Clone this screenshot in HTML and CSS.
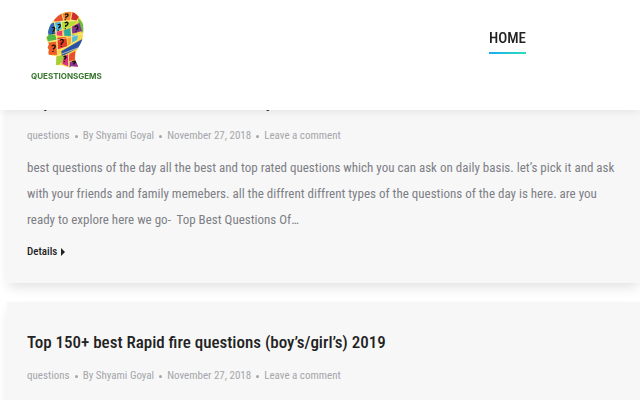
FILE: index.html
```html
<!DOCTYPE html>
<html lang="en">
<head>
<meta charset="utf-8">
<meta name="viewport" content="width=device-width, initial-scale=1">
<title>QuestionsGems</title>
<link rel="stylesheet" href="styles.css">
</head>
<body>
<header class="site-header">
  <a class="brand" href="#">
    <svg class="brand-mark" viewBox="78 33 120 174" aria-hidden="true">
      <defs>
        <clipPath id="head"><path d="M105 57Q120 37 147 35Q164 34 174 48Q193 66 190 95Q189 121 177 139Q161 163 167 182L175 200L154 199L148 203L127 196L108 195L109 169Q99 166 87 164Q84 159 87 149L83 143L87 132L78 115Q79 110 86 106L84 96Q88 73 105 57Z"/></clipPath>
      </defs>
      <g clip-path="url(#head)">
        <path fill="#f7d84a" d="M70 30h130v180H70z"/>
        <path fill="#e94f2d" d="M100 60L124 34L130 61L108 68Z"/>
        <path fill="#f58a32" d="M126 34L155 34L150 61L131 60Z"/>
        <path fill="#cf2f2c" d="M157 34L178 48L169 62L153 58Z"/>
        <path fill="#2c67b8" d="M84 75L103 66L106 102L82 106Z"/>
        <path fill="#50b9e2" d="M105 70L122 64L126 87L109 95Z"/>
        <path fill="#b9dc37" d="M124 64L174 63L157 79L126 88Z"/>
        <path fill="#6bbd45" d="M173 53L194 75L191 99L181 93Z"/>
        <path fill="#82358c" d="M154 81L178 68L186 93L157 101Z"/>
        <path fill="#52b848" d="M78 103L105 105L111 119L84 125Z"/>
        <path fill="#e73d70" d="M109 95L130 91L128 108L110 106Z"/>
        <path fill="#25aea0" d="M132 91L151 84L153 108L133 107Z"/>
        <path fill="#f05b28" d="M80 128L109 125L112 164L80 165Z"/>
        <path fill="#e63b28" d="M112 113L139 111L142 139L114 149Z"/>
        <path fill="#f8a530" d="M142 109L155 108L153 131L144 137Z"/>
        <path fill="#57bad5" d="M155 104L174 105L171 121L156 128Z"/>
        <path fill="#2951a5" d="M124 154L192 114L181 141L125 169Z"/>
        <path fill="#a5ce3b" d="M109 169L135 166L129 185L108 199Z"/>
        <path fill="#da2f79" d="M132 168L145 163L145 199L127 192Z"/>
        <path fill="#ec4a33" d="M148 162L166 153L164 180L146 184Z"/>
        <path fill="#8d3596" d="M149 186L168 181L178 204L148 203Z"/>
        <path fill="none" stroke="#fff4ad" stroke-width="2" d="M124 36L131 61M151 62L157 34M82 72L108 65L174 62M103 66L110 106L112 163M124 64L129 110M155 78L155 130M80 126L112 120L191 101M112 150L142 140L173 120M109 168L181 141M145 162L147 204"/>
        <path fill="none" stroke="#17130f" stroke-width="4" d="M135 45Q141 39 144 44Q145 49 138 51L137 55M136 58v3M134 69Q143 64 144 70Q143 76 137 77L137 81M136 85v3M113 75Q120 70 121 77Q119 82 115 85M115 89v3M96 84Q103 79 104 86Q102 91 98 95M98 98v3M164 80Q172 74 174 82Q173 88 168 90M168 94v3M120 121Q128 115 130 122Q129 128 124 131L124 135M124 138v3M95 138Q104 132 106 139Q104 145 99 148M99 153v3M131 171Q136 166 138 172L133 179M133 183v3M157 186Q164 181 166 187L160 193"/>
      </g>
    </svg>
    <span class="brand-name">QUESTIONSGEMS</span>
  </a>
  <nav class="site-nav"><a class="nav-link" href="#">HOME</a></nav>
</header>
<main class="posts">
  <article class="post">
    <h2 class="post-title"><a href="#">Top 100+ Best Questions Of The Day</a></h2>
    <div class="post-meta"><a href="#">questions</a><a href="#">By Shyami Goyal</a><a href="#">November 27, 2018</a><a href="#">Leave a comment</a></div>
    <p class="post-excerpt">best questions of the day all the best and top rated questions which you can ask on daily basis. let’s pick it and ask with your friends and family memebers. all the diffrent diffrent types of the questions of the day is here. are you ready to explore here we go-&nbsp; Top Best Questions Of…</p>
    <a class="details" href="#">Details</a>
  </article>
  <article class="post">
    <h2 class="post-title"><a href="#">Top 150+ best Rapid fire questions (boy’s/girl’s) 2019</a></h2>
    <div class="post-meta"><a href="#">questions</a><a href="#">By Shyami Goyal</a><a href="#">November 27, 2018</a><a href="#">Leave a comment</a></div>
  </article>
</main>
</body>
</html>
```
FILE: styles.css
```css
* { box-sizing: border-box; }
body {
  margin: 0;
  background: #fff;
  font-family: "Roboto Condensed", Roboto, "Liberation Sans", sans-serif;
  color: #222;
  overflow: hidden;
}
a { color: inherit; text-decoration: none; }
.site-header {
  position: fixed;
  top: 0;
  left: 0;
  right: 0;
  z-index: 2;
  height: 110px;
  padding: 11px 114px 0 31px;
  display: flex;
  justify-content: space-between;
  align-items: flex-start;
  background: #fff;
  box-shadow: 0 0 10px rgba(0, 0, 0, 0.1);
}
.brand { display: flex; flex-direction: column; align-items: center; }
.brand-mark { width: 40px; height: 58px; }
.brand-name {
  font: 700 8px/14px Inter, sans-serif;
  color: #37772f;
}
.site-nav { padding-top: 15px; }
.nav-link {
  display: block;
  font-size: 15px;
  font-weight: 500;
  line-height: 24px;
  padding-bottom: 2px;
  border-bottom: 2px solid;
  border-image: linear-gradient(90deg, #18aaf5, #2de0b5) 1;
}
.posts {
  display: flex;
  flex-direction: column;
  gap: 19px;
  padding: 62px 0 0 7px;
}
.post {
  padding: 27px 20px 21px;
  background: #f7f7f7;
  box-shadow: 0 6px 12px -2px rgba(0, 0, 0, 0.12);
}
.post-title {
  margin: 0 0 10px;
  font-size: 17px;
  font-weight: 500;
  line-height: 26px;
}
.post-meta {
  display: flex;
  font-size: 11px;
  line-height: 22px;
  color: #a4a6aa;
}
.post-meta a + a::before {
  content: "";
  display: inline-block;
  width: 3px;
  height: 3px;
  margin: 0 5px;
  border-radius: 50%;
  background: currentColor;
  vertical-align: middle;
}
.post-excerpt {
  margin: 8px 0 7px;
  font-size: 13px;
  line-height: 26px;
  color: #7d7f86;
}
.details {
  display: inline-flex;
  align-items: center;
  gap: 4px;
  font-size: 11px;
  font-weight: 500;
  line-height: 20px;
}
.details::after {
  content: "";
  border: solid transparent;
  border-width: 4px 0 4px 4px;
  border-left-color: currentColor;
}
```
